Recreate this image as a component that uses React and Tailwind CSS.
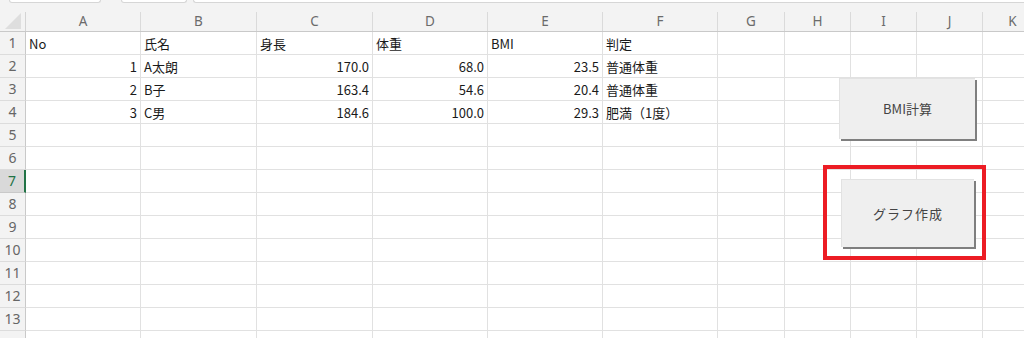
import React from "react";

const cols = [
  { l: "A", w: "w-[115px]" },
  { l: "B", w: "w-[116px]" },
  { l: "C", w: "w-[116px]" },
  { l: "D", w: "w-[115px]" },
  { l: "E", w: "w-[115px]" },
  { l: "F", w: "w-[115px]" },
  { l: "G", w: "w-[67px]" },
  { l: "H", w: "w-[66px]" },
  { l: "I", w: "w-[66px]" },
  { l: "J", w: "w-[66px]" },
  { l: "K", w: "w-[60px]" },
];

const data = [
  [{ t: "No" }, { t: "氏名" }, { t: "身長" }, { t: "体重" }, { t: "BMI" }, { t: "判定" }],
  [{ t: "1", r: 1 }, { t: "A太朗" }, { t: "170.0", r: 1 }, { t: "68.0", r: 1 }, { t: "23.5", r: 1 }, { t: "普通体重" }],
  [{ t: "2", r: 1 }, { t: "B子" }, { t: "163.4", r: 1 }, { t: "54.6", r: 1 }, { t: "20.4", r: 1 }, { t: "普通体重" }],
  [{ t: "3", r: 1 }, { t: "C男" }, { t: "184.6", r: 1 }, { t: "100.0", r: 1 }, { t: "29.3", r: 1 }, { t: "肥満（1度）" }],
];

const font = { fontFamily: '"Noto Sans CJK JP", "Noto Sans", sans-serif' };

export default function App() {
  const rows = Array.from({ length: 14 }, (_, i) => i + 1);
  return (
    <div className="relative w-[1024px] h-[338px] overflow-hidden bg-white" style={font}>
      {/* top strip */}
      <div className="h-[12px] bg-[#f3f3f3] flex items-start pl-[9px] gap-[20px]">
        <div className="w-[92px] h-[3px] bg-white border border-t-0 border-[#d6d6d6] rounded-b-[3px]" />
        <div className="flex gap-[6px] flex-1">
          <div className="w-[66px] h-[3px] bg-white border border-t-0 border-[#d6d6d6] rounded-b-[3px]" />
          <div className="flex-1 h-[3px] bg-white border border-t-0 border-r-0 border-[#d6d6d6] rounded-bl-[3px]" />
        </div>
      </div>
      {/* column header */}
      <div className="flex h-[20px] bg-[#f3f3f3] border-b border-[#c9c9c9]">
        <div className="w-[26px] shrink-0 border-r border-[#d4d4d4] flex items-end justify-end pr-[4px] pb-[2px]">
          <div className="w-0 h-0 border-l-[16px] border-l-transparent border-b-[16px] border-b-[#dedede]" />
        </div>
        {cols.map((c) => (
          <div
            key={c.l}
            className={`${c.w} shrink-0 border-r border-[#dadada] flex items-center justify-center text-[13.5px] text-[#6b6b6b] leading-none`}
            style={{ fontFamily: '"Noto Sans", sans-serif' }}
          >
            {c.l}
          </div>
        ))}
      </div>
      {/* rows */}
      {rows.map((r) => (
        <div key={r} className="flex h-[23px]">
          <div
            className={`w-[26px] shrink-0 border-b flex items-center justify-center text-[14px] leading-none ${
              r === 7
                ? "bg-[#d9d9d9] text-[#217346] border-r-2 border-r-[#217346] border-b-[#c9c9c9]"
                : "bg-[#f3f3f3] text-[#666] border-r border-r-[#c9c9c9] border-b-[#dcdcdc]"
            }`}
            style={{ fontFamily: '"Noto Sans", sans-serif' }}
          >
            {r <= 13 ? r : ""}
          </div>
          {cols.map((c, ci) => {
            const cell = data[r - 1] && data[r - 1][ci];
            return (
              <div
                key={c.l}
                className={`${c.w} shrink-0 border-r border-b border-[#e1e1e1] flex items-center text-[13px] text-[#1a1a1a] leading-none px-[3px] ${
                  cell && cell.r ? "justify-end" : "justify-start"
                }`}
              >
                {cell ? cell.t : ""}
              </div>
            );
          })}
        </div>
      ))}

      {/* floating button shapes over the sheet */}
      <div className="absolute left-[839px] top-[78px] w-[136px] h-[61px] bg-[#efefef] border-t border-l border-[#e2e2e2] shadow-[2px_2px_0_#7f7f7f] flex items-center justify-center text-[13px] text-[#444]">
        BMI計算
      </div>
      <div className="absolute left-[823px] top-[165px] w-[163px] h-[95px] border-[4px] border-[#ec1c24] pl-[14px] pt-[10px]">
        <div className="w-[133px] h-[68px] bg-[#efefef] border-t border-l border-[#e2e2e2] shadow-[2px_2px_0_#7f7f7f] flex items-center justify-center text-[13px] text-[#444] tracking-[1px]">
          グラフ作成
        </div>
      </div>
    </div>
  );
}
